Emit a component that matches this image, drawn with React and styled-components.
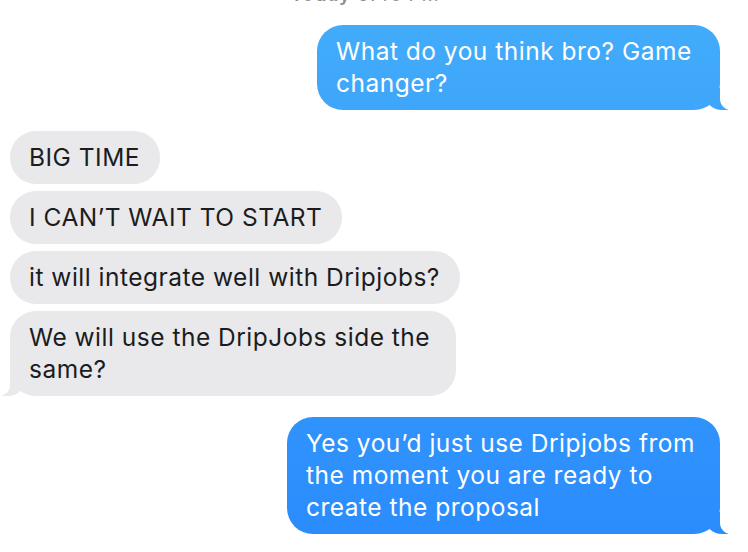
import React from "react";
import styled, { createGlobalStyle, css } from "styled-components";

const Global = createGlobalStyle`
  html, body { margin: 0; padding: 0; background: #ffffff; }
  body { font-family: Inter, "Noto Sans", "Liberation Sans", sans-serif; }
`;

const Thread = styled.div`
  display: flex;
  flex-direction: column;
  padding: 0 28px 0 10px;
  overflow: hidden;
  height: 552px;
  box-sizing: border-box;
`;

const Stamp = styled.div`
  align-self: center;
  margin-top: -16px;
  margin-bottom: 19px;
  font-size: 19px;
  line-height: 22px;
  letter-spacing: 0.9px;
  color: #8e8e93;
  white-space: nowrap;
`;

const StampDay = styled.span`
  font-weight: 600;
`;

const BLUE = "linear-gradient(180deg, #43adfa 0px, #2a8bfd 552px)";

const Bubble = styled.div`
  position: relative;
  box-sizing: border-box;
  max-width: ${(p) => p.$max || 500}px;
  padding: 10px 20px 11px 19px;
  border-radius: 26px;
  font-size: 24.5px;
  line-height: 32px;
  letter-spacing: 0.5px;
  margin-top: ${(p) => (p.$gap ? p.$gap : 0)}px;

  ${(p) =>
    p.$me
      ? css`
          align-self: flex-end;
          color: #ffffff;
          background: ${BLUE};
          background-attachment: fixed;
        `
      : css`
          align-self: flex-start;
          color: #1c1c1e;
          background: #e9e9eb;
        `}

  ${(p) =>
    p.$tail &&
    p.$me &&
    css`
      &::before {
        content: "";
        position: absolute;
        bottom: 0;
        right: -8px;
        width: 22px;
        height: 22px;
        background: ${BLUE};
        background-attachment: fixed;
        border-bottom-left-radius: 16px 14px;
      }
      &::after {
        content: "";
        position: absolute;
        bottom: 0;
        right: -28px;
        width: 28px;
        height: 22px;
        background: #ffffff;
        border-bottom-left-radius: 11px;
      }
    `}

  ${(p) =>
    p.$tail &&
    !p.$me &&
    css`
      &::before {
        content: "";
        position: absolute;
        bottom: 0;
        left: -8px;
        width: 22px;
        height: 22px;
        background: #e9e9eb;
        border-bottom-right-radius: 16px 14px;
      }
      &::after {
        content: "";
        position: absolute;
        bottom: 0;
        left: -28px;
        width: 28px;
        height: 22px;
        background: #ffffff;
        border-bottom-right-radius: 11px;
      }
    `}
`;

const Text = styled.span`
  position: relative;
  z-index: 1;
`;

const messages = [
  { me: true, tail: true, gap: 0, max: 403, text: "What do you think bro? Game changer?" },
  { me: false, gap: 21, text: "BIG TIME" },
  { me: false, gap: 7, text: "I CAN\u2019T WAIT TO START" },
  { me: false, gap: 7, text: "it will integrate well with Dripjobs?" },
  { me: false, tail: true, gap: 7, max: 446, text: "We will use the DripJobs side the same?" },
  { me: true, tail: true, gap: 21, max: 433, text: "Yes you\u2019d just use Dripjobs from the moment you are ready to create the proposal" },
];

export default function App() {
  return (
    <>
      <Global />
      <Thread>
        <Stamp>
          <StampDay>Today</StampDay> 9:43 PM
        </Stamp>
        {messages.map((m, i) => (
          <Bubble key={i} $me={m.me} $tail={m.tail} $gap={m.gap} $max={m.max}>
            <Text>{m.text}</Text>
          </Bubble>
        ))}
      </Thread>
    </>
  );
}
